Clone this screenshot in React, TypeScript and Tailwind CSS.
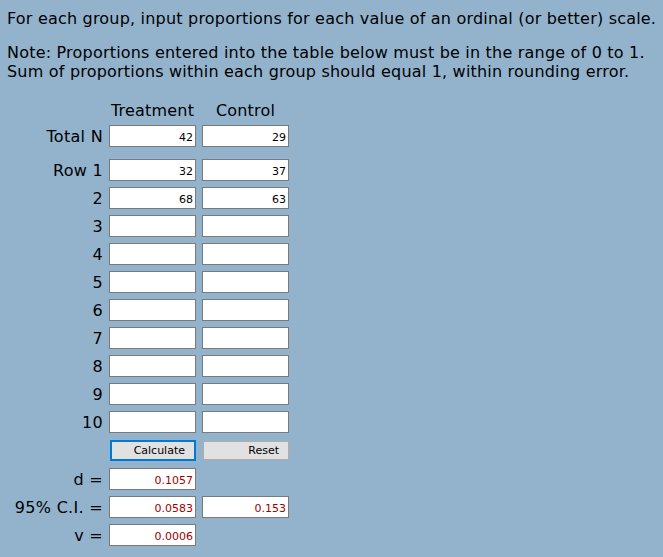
import { useState } from "react";

const font = "font-['DejaVu_Sans',sans-serif]";

function Field({ value, red = false }: { value: string; red?: boolean }) {
  return (
    <input
      readOnly
      value={value}
      className={`h-[22px] w-[87px] border border-[#7a7a7a] bg-white pt-[2px] pr-[2px] text-right text-[11px] tracking-normal outline-none ${font} ${
        red ? "text-[#a00000]" : "text-black"
      }`}
    />
  );
}

function Row({ label, a, b, red, hideB }: { label: string; a?: string; b?: string; red?: boolean; hideB?: boolean }) {
  return (
    <div className="flex h-[22px] items-start gap-[6px]">
      <div className="h-[22px] w-[103px] pt-[2px] text-right leading-[20px] tracking-[0.3px]">{label}</div>
      <Field value={a ?? ""} red={red} />
      {!hideB && <Field value={b ?? ""} red={red} />}
    </div>
  );
}

export default function App() {
  const [rows] = useState([
    ["Row 1", "32", "37"],
    ["2", "68", "63"],
    ["3", "", ""],
    ["4", "", ""],
    ["5", "", ""],
    ["6", "", ""],
    ["7", "", ""],
    ["8", "", ""],
    ["9", "", ""],
    ["10", "", ""],
  ]);

  return (
    <div className={`min-h-screen bg-[#93b3cd] text-[16px] leading-[19px] tracking-[0.2px] text-black ${font}`}>
      <div className="pl-[7px] pt-[9px]">
        <p>For each group, input proportions for each value of an ordinal (or better) scale.</p>
        <p className="mt-[15px]">
          Note: Proportions entered into the table below must be in the range of 0 to 1.
          <br />
          Sum of proportions within each group should equal 1, within rounding error.
        </p>
      </div>

      <div className="mt-[20px] flex flex-col">
        <div className="flex h-[19px] gap-[6px]">
          <div className="w-[103px]" />
          <div className="w-[87px] text-center">Treatment</div>
          <div className="w-[87px] text-center">Control</div>
        </div>

        <div className="mt-[5px]">
          <Row label="Total N" a="42" b="29" />
        </div>

        <div className="mt-[12px] flex flex-col gap-[6px]">
          {rows.map(([l, a, b]) => (
            <Row key={l} label={l} a={a} b={b} />
          ))}
        </div>

        <div className="mt-[7px] flex h-[21px] gap-[6px]">
          <div className="w-[103px]" />
          <button className="ml-[1px] h-[21px] w-[86px] border-2 border-[#0078d7] bg-[#e1e1e1] pr-[9px] text-right text-[11px] leading-[17px] tracking-normal">
            Calculate
          </button>
          <button className="my-[1px] ml-[1px] h-[19px] w-[86px] border border-[#adadad] bg-[#e1e1e1] pr-[9px] text-right text-[11px] leading-[17px] tracking-normal">
            Reset
          </button>
        </div>

        <div className="mt-[7px] flex flex-col gap-[6px]">
          <Row label="d =" a="0.1057" red hideB />
          <Row label="95% C.I. =" a="0.0583" b="0.153" red />
          <Row label="v =" a="0.0006" red hideB />
        </div>
      </div>
    </div>
  );
}
